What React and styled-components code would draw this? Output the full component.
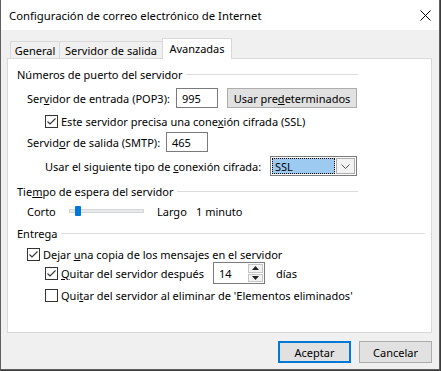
import React from "react";
import styled, { createGlobalStyle } from "styled-components";

const GlobalStyle = createGlobalStyle`
  html, body { margin: 0; padding: 0; background: #3c3c3c; }
  body {
    font-family: "Noto Sans", "Segoe UI", sans-serif;
    font-size: 11px;
    color: #000;
  }
  * { box-sizing: border-box; }
`;

const Window = styled.div`
  width: 440px;
  height: 370px;
  background: #f0f0f0;
  border: 1px solid #5f5f5f;
  border-top: none;
  display: flex;
  flex-direction: column;
`;

const TitleBar = styled.div`
  height: 30px;
  flex: none;
  background: #fff;
  display: flex;
  align-items: center;
  justify-content: space-between;
  padding: 1px 8px 0 8px;
  font-size: 11.3px;
`;

const Body = styled.div`
  flex: 1;
  display: flex;
  flex-direction: column;
  padding: 8px 7px 0 6px;
`;

const TabRow = styled.div`
  display: flex;
  align-items: flex-end;
  height: 20px;
  padding-left: 3px;
`;

const Tab = styled.div`
  width: ${(p) => p.$w}px;
  height: ${(p) => (p.$active ? 21 : 17)}px;
  margin-left: ${(p) => (p.$first ? 0 : -1)}px;
  margin-bottom: ${(p) => (p.$active ? -1 : 0)}px;
  padding-bottom: ${(p) => (p.$active ? 2 : 0)}px;
  border: 1px solid #d9d9d9;
  border-bottom: none;
  background: ${(p) => (p.$active ? "#fff" : "#f0f0f0")};
  position: relative;
  z-index: ${(p) => (p.$active ? 1 : 0)};
  display: flex;
  align-items: center;
  justify-content: center;
  white-space: nowrap;
`;

const Panel = styled.div`
  height: 275px;
  flex: none;
  background: #fff;
  border: 1px solid #d9d9d9;
  padding: 5px 0 0 9px;
  display: flex;
  flex-direction: column;
`;

const GroupHeader = styled.div`
  display: flex;
  align-items: center;
  height: 20px;
  width: ${(p) => p.$w}px;
  margin-top: ${(p) => p.$mt || 0}px;
  white-space: nowrap;
  &::after {
    content: "";
    flex: 1;
    height: 1px;
    margin-left: 4px;
    background: #dcdcdc;
  }
`;

const Row = styled.div`
  display: flex;
  align-items: center;
  height: ${(p) => p.$h || 20}px;
  margin-top: ${(p) => p.$mt || 0}px;
  padding-left: ${(p) => p.$indent || 0}px;
  white-space: nowrap;
`;

const Label = styled.span`
  display: inline-block;
  width: ${(p) => (p.$w ? `${p.$w}px` : "auto")};
  margin-left: ${(p) => p.$ml || 0}px;
  flex: none;
`;

const TextInput = styled.div`
  width: ${(p) => p.$w}px;
  height: 20px;
  border: 1px solid #7a7a7a;
  background: #fff;
  display: flex;
  align-items: center;
  padding-left: 5px;
  flex: none;
`;

const Button = styled.div`
  width: ${(p) => p.$w}px;
  height: ${(p) => p.$h || 20}px;
  margin-left: ${(p) => p.$ml || 0}px;
  background: #e1e1e1;
  border: ${(p) => (p.$default ? "2px solid #0078d7" : "1px solid #adadad")};
  display: flex;
  align-items: center;
  justify-content: center;
  flex: none;
`;

const Box = styled.div`
  width: 13px;
  height: 13px;
  border: 1px solid #333;
  background: #fff;
  flex: none;
  display: flex;
  align-items: center;
  justify-content: center;
`;

const Check = ({ checked }) => (
  <Box>
    {checked && (
      <svg width="11" height="11" viewBox="0 0 11 11">
        <path d="M1.5 5.5 L4 8 L9.5 2.5" fill="none" stroke="#333" strokeWidth="1.1" />
      </svg>
    )}
  </Box>
);

const Select = styled.div`
  width: ${(p) => p.$w}px;
  height: 20px;
  border: 1px solid #7a7a7a;
  background: #fff;
  display: flex;
  padding: 1px;
  flex: none;
`;

const SelectValue = styled.div`
  flex: 1;
  background: #9ccaf1;
  border: 1px dotted #000;
  display: flex;
  align-items: center;
  padding-left: 2px;
`;

const SelectArrow = styled.div`
  width: 19px;
  margin-left: 1px;
  border: 1px solid #adadad;
  background: #f3f3f3;
  display: flex;
  align-items: center;
  justify-content: center;
`;

const Track = styled.div`
  width: ${(p) => p.$w}px;
  height: 4px;
  background: #e7eaea;
  border: 1px solid #d6d6d6;
  margin-right: 13px;
  position: relative;
  flex: none;
`;

const Thumb = styled.div`
  position: absolute;
  left: 5px;
  top: -4px;
  width: 6px;
  height: 10px;
  border-radius: 1px;
  background: #0078d7;
`;

const Spinner = styled.div`
  width: ${(p) => p.$w}px;
  height: 22px;
  border: 1px solid #7a7a7a;
  background: #fff;
  display: flex;
  flex: none;
  margin-right: 11px;
`;

const SpinValue = styled.div`
  flex: 1;
  display: flex;
  align-items: center;
  padding-left: 5px;
`;

const SpinButtons = styled.div`
  width: 16px;
  display: flex;
  flex-direction: column;
  padding: 1px 1px 1px 0;
  gap: 1px;
`;

const SpinBtn = styled.div`
  flex: 1;
  border: 1px solid #c5c5c5;
  background: #f3f3f3;
  display: flex;
  align-items: center;
  justify-content: center;
`;

const Footer = styled.div`
  display: flex;
  justify-content: flex-end;
  gap: 8px;
  margin-top: 8px;
`;

const Tri = ({ up }) => (
  <svg width="7" height="4" viewBox="0 0 7 4">
    <path d={up ? "M0 4 L3.5 0 L7 4 Z" : "M0 0 L3.5 4 L7 0 Z"} fill="#222" />
  </svg>
);

export default function App() {
  return (
    <>
      <GlobalStyle />
      <Window>
        <TitleBar>
          <span>Configuración de correo electrónico de Internet</span>
          <svg width="11" height="11" viewBox="0 0 11 11">
            <path d="M0.5 0.5 L10.5 10.5 M10.5 0.5 L0.5 10.5" stroke="#000" strokeWidth="1" />
          </svg>
        </TitleBar>
        <Body>
          <TabRow>
            <Tab $w={50} $first>General</Tab>
            <Tab $w={104}>Servidor de salida</Tab>
            <Tab $w={70} $active>Avanzadas</Tab>
          </TabRow>
          <Panel>
            <GroupHeader $w={341}>Números de puerto del servidor</GroupHeader>
            <Row $mt={4} $indent={10}>
              <Label $w={149}>Ser<u>v</u>idor de entrada (POP3):</Label>
              <TextInput $w={42}>995</TextInput>
              <Button $w={130} $ml={9}>Usar pre<u>d</u>eterminados</Button>
            </Row>
            <Row $mt={3} $indent={28}>
              <Check checked />
              <Label $ml={3}>Este servidor precisa una cone<u>x</u>ión cifrada (SSL)</Label>
            </Row>
            <Row $mt={1} $indent={10}>
              <Label $w={139}>Servid<u>o</u>r de salida (SMTP):</Label>
              <TextInput $w={42}>465</TextInput>
            </Row>
            <Row $mt={4} $indent={28}>
              <Label $w={225}>Usar el siguiente tipo de <u>c</u>onexión cifrada:</Label>
              <Select $w={87}>
                <SelectValue>SSL</SelectValue>
                <SelectArrow>
                  <svg width="9" height="5" viewBox="0 0 9 5">
                    <path d="M0.5 0.5 L4.5 4.5 L8.5 0.5" fill="none" stroke="#555" strokeWidth="1" />
                  </svg>
                </SelectArrow>
              </Select>
            </Row>
            <GroupHeader $w={341} $mt={5}>Tie<u>m</u>po de espera del servidor</GroupHeader>
            <Row $indent={10}>
              <Label $w={42}>Corto</Label>
              <Track $w={75}>
                <Thumb />
              </Track>
              <Label $w={39}>Largo</Label>
              <Label>1 minuto</Label>
            </Row>
            <GroupHeader $w={408} $mt={2}>Entrega</GroupHeader>
            <Row $mt={3} $h={16} $indent={10}>
              <Check checked />
              <Label $ml={3}>Dejar <u>u</u>na copia de los mensajes en el servidor</Label>
            </Row>
            <Row $h={22} $indent={28}>
              <Check checked />
              <Label $ml={3} $w={152}><u>Q</u>uitar del servidor después</Label>
              <Spinner $w={52}>
                <SpinValue>14</SpinValue>
                <SpinButtons>
                  <SpinBtn><Tri up /></SpinBtn>
                  <SpinBtn><Tri /></SpinBtn>
                </SpinButtons>
              </Spinner>
              <Label>días</Label>
            </Row>
            <Row $mt={1} $indent={28}>
              <Check />
              <Label $ml={3}>Qui<u>t</u>ar del servidor al eliminar de 'Elementos eliminados'</Label>
            </Row>
          </Panel>
          <Footer>
            <Button $w={73} $h={22} $default>Aceptar</Button>
            <Button $w={73} $h={22}>Cancelar</Button>
          </Footer>
        </Body>
      </Window>
    </>
  );
}
